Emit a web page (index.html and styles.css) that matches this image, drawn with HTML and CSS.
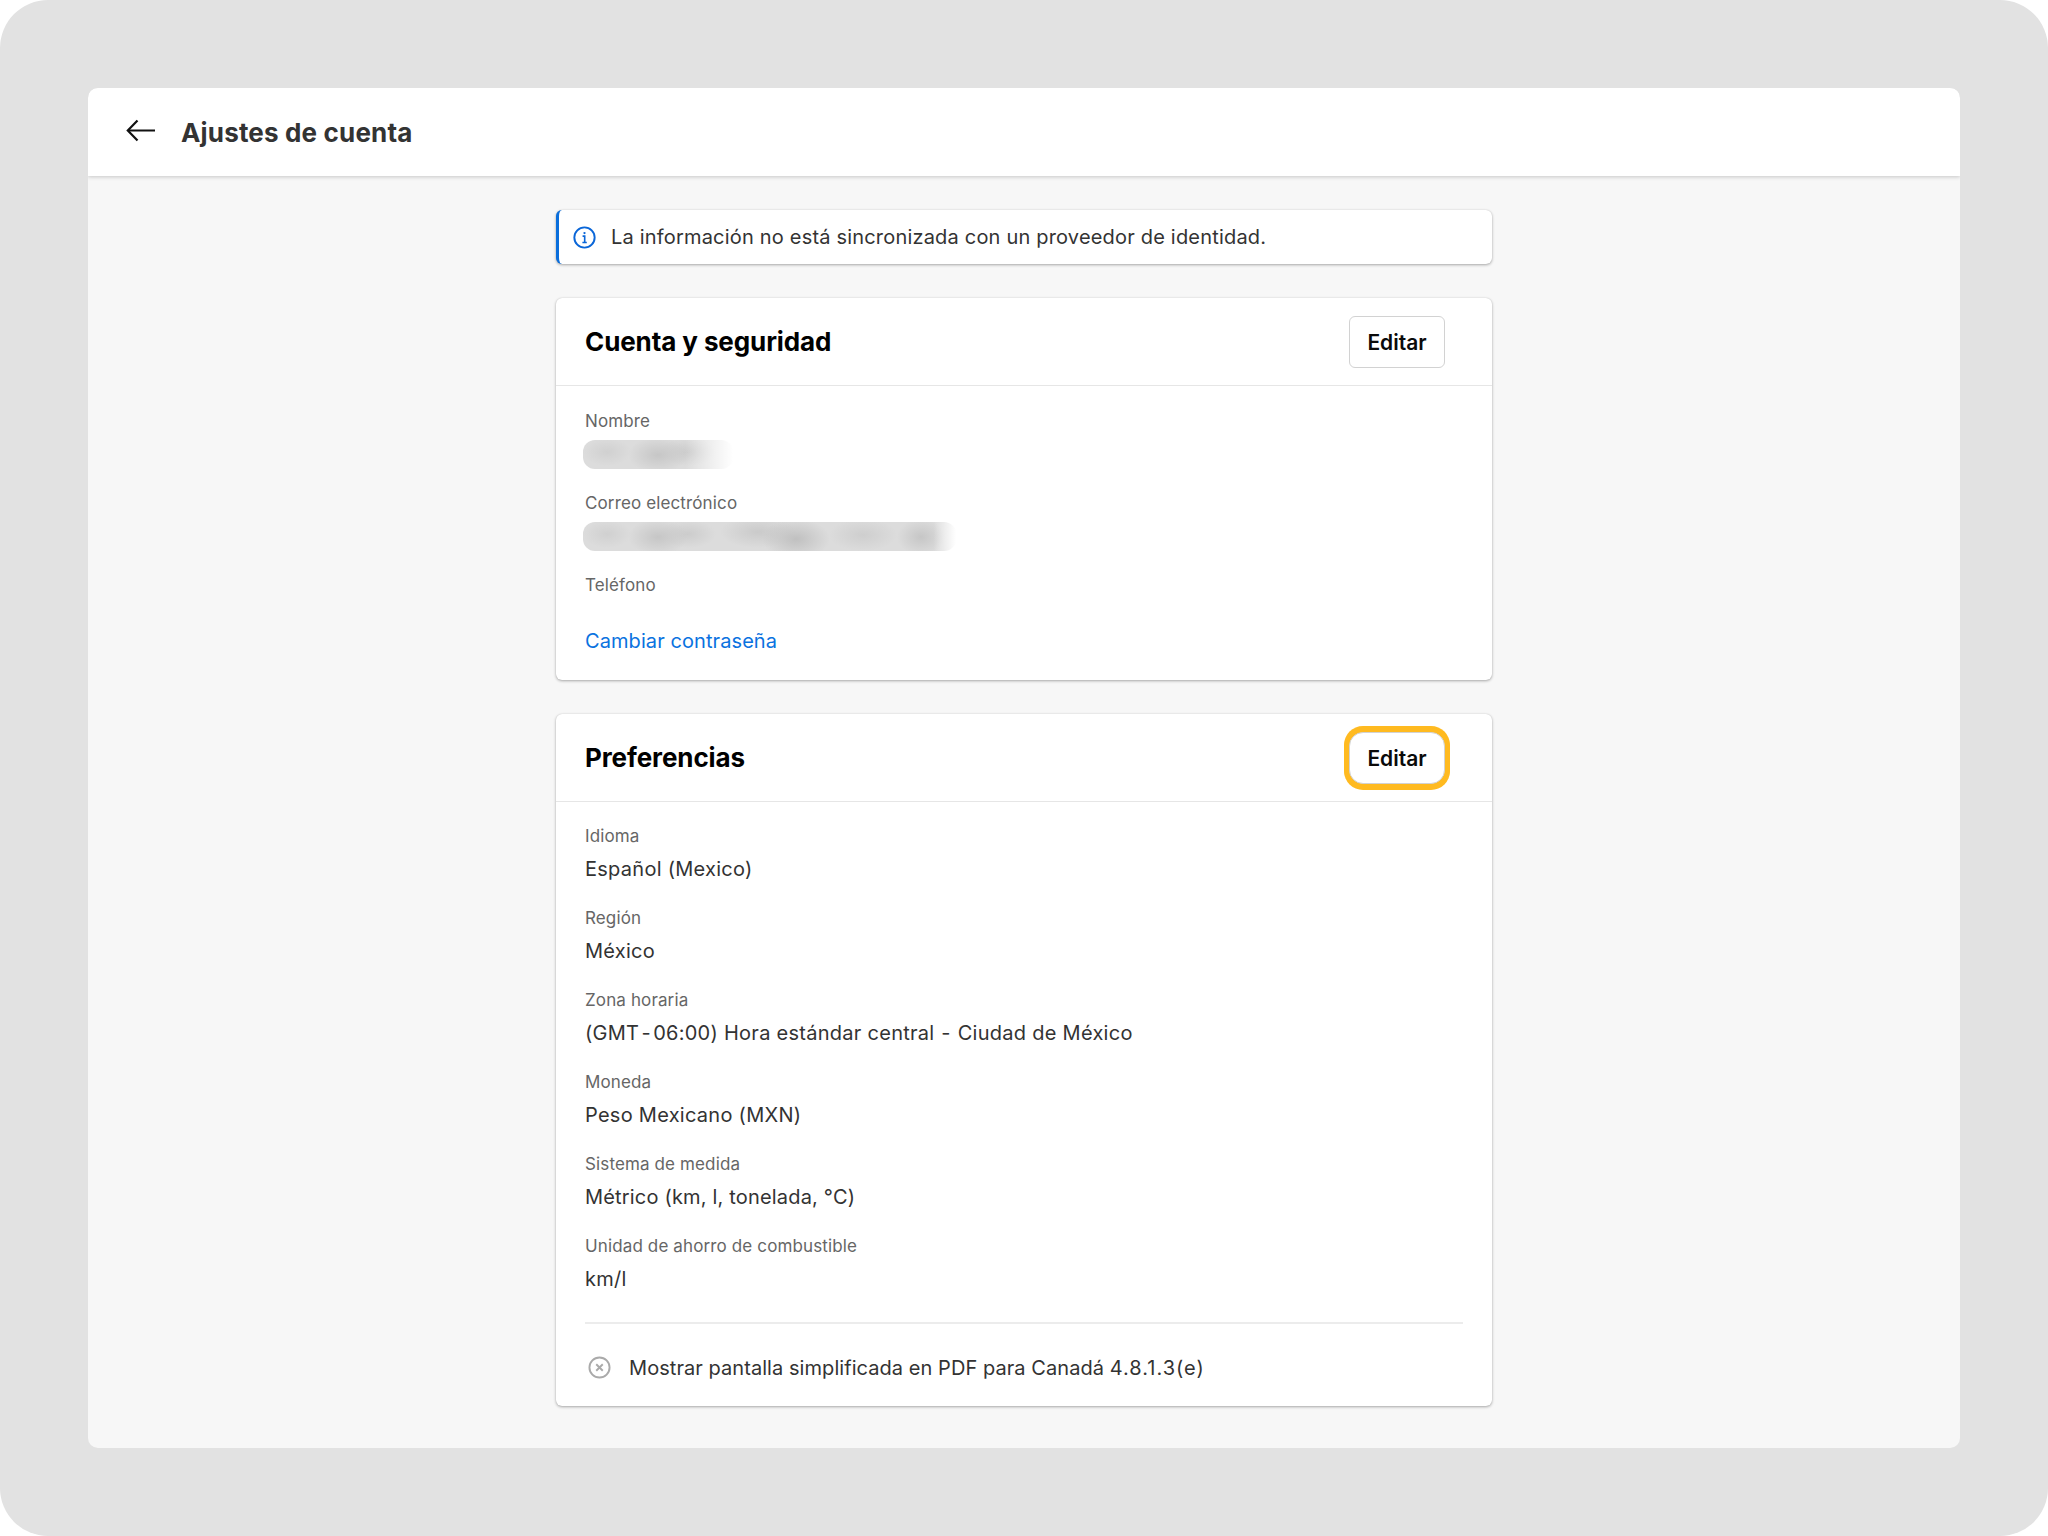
FILE: index.html
```html
<!DOCTYPE html>
<html lang="es">
<head>
<meta charset="utf-8">
<title>Ajustes de cuenta</title>
<link rel="stylesheet" href="styles.css">
</head>
<body>
<div class="frame">
  <div class="app">
    <header class="topbar">
      <svg class="back" width="30" height="24" viewBox="0 0 30 24" fill="none" stroke="#111" stroke-width="2.2"><path d="M29 11.5H2"/><path d="M11.5 1.5L1.8 11.5L11.5 21.5"/></svg>
      <h1 class="page-title">Ajustes de cuenta</h1>
    </header>
    <main class="content">
      <div class="notice">
        <svg class="notice-icon" width="23" height="23" viewBox="0 0 24 24" fill="none" stroke="#0a66d8" stroke-width="2"><circle cx="12" cy="12" r="10.6"/><path d="M10 10.6h2.2v6.4M9.8 17.2h4.6" stroke-width="1.7"/><circle cx="12" cy="7.4" r="1.2" fill="#0a66d8" stroke="none"/></svg>
        <span>La información no está sincronizada con un proveedor de identidad.</span>
      </div>

      <section class="card">
        <div class="card-head">
          <h2 class="card-title">Cuenta y seguridad</h2>
          <button class="edit">Editar</button>
        </div>
        <div class="card-body account-body">
          <div class="field"><div class="label">Nombre</div><div class="redact redact-name"></div></div>
          <div class="field"><div class="label">Correo electrónico</div><div class="redact redact-mail"></div></div>
          <div class="field field-empty"><div class="label">Teléfono</div></div>
          <a class="link" href="#">Cambiar contraseña</a>
        </div>
      </section>

      <section class="card">
        <div class="card-head">
          <h2 class="card-title">Preferencias</h2>
          <button class="edit edit-focus">Editar</button>
        </div>
        <div class="card-body prefs-body">
          <div class="field"><div class="label">Idioma</div><div class="value">Español (Mexico)</div></div>
          <div class="field"><div class="label">Región</div><div class="value">México</div></div>
          <div class="field"><div class="label">Zona horaria</div><div class="value">(GMT<span class="dash">-</span>06:00) Hora estándar central <span class="dash dash-narrow">-</span> Ciudad de México</div></div>
          <div class="field"><div class="label">Moneda</div><div class="value">Peso Mexicano (MXN)</div></div>
          <div class="field"><div class="label">Sistema de medida</div><div class="value value-tight">Métrico (km, l, tonelada, °C)</div></div>
          <div class="field"><div class="label">Unidad de ahorro de combustible</div><div class="value">km/l</div></div>
          <div class="rule"></div>
          <div class="flag">
            <svg class="flag-icon" width="23" height="23" viewBox="0 0 24 24" fill="none" stroke="#aaa" stroke-width="2"><circle cx="12" cy="12" r="10.5"/><path d="M8.6 8.6l6.8 6.8M15.4 8.6l-6.8 6.8"/></svg>
            <span>Mostrar pantalla simplificada en PDF para Canadá <span class="code">4.8.1.3(e)</span></span>
          </div>
        </div>
      </section>
    </main>
  </div>
</div>
</body>
</html>
```

FILE: styles.css
```css
* { box-sizing: border-box; }
html, body { margin: 0; padding: 0; background: #fff; }
body { font-family: Inter, "Liberation Sans", sans-serif; color: #333; }

.frame {
  width: 2048px;
  height: 1536px;
  padding: 88px;
  background: #e2e2e2;
  border-radius: 48px;
}
.app {
  height: 1360px;
  background: #f7f7f7;
  border-radius: 10px;
  overflow: hidden;
}
.topbar {
  height: 88px;
  display: flex;
  align-items: center;
  padding-left: 38px;
  background: #fff;
  box-shadow: 0 1px 4px rgba(0,0,0,.2);
  position: relative;
}
.back { flex: none; margin-right: 25px; margin-top: -3px; }
.page-title { margin: 2px 0 0; font-size: 26px; line-height: 32px; font-weight: 700; letter-spacing: .17px; color: #333; }

.content {
  width: 936px;
  margin: 34px auto 0;
  display: flex;
  flex-direction: column;
  gap: 34px;
}
.notice {
  height: 54px;
  display: flex;
  align-items: center;
  padding-left: 14px;
  gap: 15px;
  background: #fff;
  border-radius: 6px;
  border-left: 3px solid #0a6edc;
  box-shadow: 0 1px 3px rgba(0,0,0,.32), 0 0 1px rgba(0,0,0,.15);
  font-size: 20px;
  letter-spacing: .19px;
  color: #333;
}
.notice-icon { flex: none; }

.card {
  background: #fff;
  border-radius: 6px;
  box-shadow: 0 1px 3px rgba(0,0,0,.32), 0 0 1px rgba(0,0,0,.15);
}
.card-head {
  height: 88px;
  display: flex;
  align-items: center;
  justify-content: space-between;
  padding: 0 47px 0 29px;
  border-bottom: 1px solid #e6e6e6;
}
.card-title { margin: 0; font-size: 26px; line-height: 32px; font-weight: 700; letter-spacing: -.1px; color: #000; }
.edit {
  width: 96px;
  height: 52px;
  padding: 1px 0 0;
  background: #fff;
  border: 1px solid #d2d2d2;
  border-radius: 6px;
  font: 600 21px Inter, "Liberation Sans", sans-serif;
  color: #0a0a0a;
}
.edit-focus { box-shadow: 0 1px 0 5px #ffba20, 0 -1px 0 5px #ffba20; border-radius: 14px; }

.card-body { padding: 24px 29px 0 29px; }
.account-body { padding: 23px 29px 24px; }
.prefs-body { padding-top: 22px; }
.field { height: 82px; }
.field-empty { height: 53px; }
.label { font-size: 17px; line-height: 24px; letter-spacing: .13px; color: #666; }
.value { margin-top: 6px; font-size: 20px; line-height: 30px; letter-spacing: .27px; color: #333; }
.value-tight { letter-spacing: .18px; }
.dash { margin: 0 2.2px; }
.dash-narrow { margin: 0 1px; }
.redact {
  margin-top: 7px;
  margin-left: -2px;
  height: 29px;
  border-radius: 12px;
}
.redact-name {
  width: 150px;
  background:
    linear-gradient(90deg, rgba(255,255,255,0) 68%, #fff 100%),
    radial-gradient(ellipse 30px 18px at 75px 15px, #c6c6c6, rgba(198,198,198,0)),
    radial-gradient(ellipse 28px 14px at 105px 12px, #cccccc, rgba(204,204,204,0)),
    radial-gradient(ellipse 24px 14px at 24px 12px, #d0d0d0, rgba(208,208,208,0)),
    #dcdcdc;
}
.redact-mail {
  width: 373px;
  background:
    linear-gradient(90deg, rgba(255,255,255,0) 94%, #fff 100%),
    radial-gradient(ellipse 30px 18px at 75px 15px, #c6c6c6, rgba(198,198,198,0)),
    radial-gradient(ellipse 28px 14px at 105px 12px, #cccccc, rgba(204,204,204,0)),
    radial-gradient(ellipse 24px 14px at 24px 12px, #d0d0d0, rgba(208,208,208,0)),
    radial-gradient(ellipse 34px 20px at 213px 17px, #c0c0c0, rgba(192,192,192,0)),
    radial-gradient(ellipse 38px 16px at 175px 10px, #cacaca, rgba(202,202,202,0)),
    radial-gradient(ellipse 34px 16px at 280px 13px, #cecece, rgba(206,206,206,0)),
    radial-gradient(ellipse 24px 18px at 338px 15px, #c6c6c6, rgba(198,198,198,0)),
    #dcdcdc;
}
.link { display: block; font-size: 20px; line-height: 30px; letter-spacing: .08px; color: #0a72e0; text-decoration: none; }
.rule { height: 2px; background: #ececec; margin-top: 6px; }
.flag {
  height: 82px;
  padding: 5px 0 0 3px;
  display: flex;
  align-items: center;
  gap: 18px;
  font-size: 20px;
  letter-spacing: .06px;
  color: #333;
}
.code { letter-spacing: 1px; }
.flag-icon { flex: none; }
```
